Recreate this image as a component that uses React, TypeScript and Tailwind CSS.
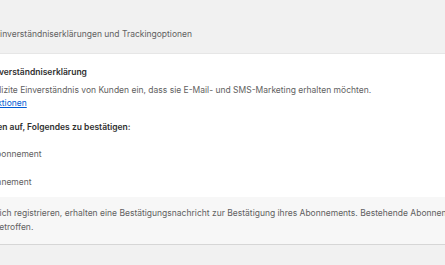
export default function App() {
  return (
    <div className="w-[445px] h-[265px] overflow-hidden bg-[#f1f1f1] font-['Inter',sans-serif] text-[8.5px] leading-[13.5px] text-[#303030]">
      <div className="h-[54px] pt-[27.5px] text-[#616161]">
        <p className="-ml-[5px] whitespace-nowrap">Einverständniserklärungen und Trackingoptionen</p>
      </div>

      <section className="bg-white shadow-[0_-1px_0_#e6e6e6,0_1px_0_#d6d6d6]">
        <div className="flex flex-col pt-[11.5px] pb-[7px] whitespace-nowrap">
          <h2 className="-ml-[13.5px] font-semibold">Einverständniserklärung</h2>
          <p className="mt-[4.5px] -ml-[53px] text-[#616161]">
            Hole das explizite Einverständnis von Kunden ein, dass sie E-Mail- und SMS-Marketing erhalten möchten.
          </p>
          <a href="#" className="-ml-[112px] text-[#005bd3] underline">Weitere Informationen zu Aktionen</a>

          <p className="mt-[10.5px] -ml-[58px] font-semibold">Fordere Kunden auf, Folgendes zu bestätigen:</p>

          <div className="mt-[13px] flex flex-col gap-[15px] text-[#616161]">
            <label className="-ml-[53px] flex items-center gap-[5px]">
              <input type="checkbox" className="w-[9px] h-[9px]" />
              <span>E-Mail-Abonnement</span>
            </label>
            <label className="-ml-[56px] flex items-center gap-[5px]">
              <input type="checkbox" className="w-[9px] h-[9px]" />
              <span>SMS-Abonnement</span>
            </label>
          </div>
        </div>

        <div className="bg-[#f7f7f7] pt-[10.5px] pb-[9.5px] text-[#616161] whitespace-nowrap">
          <p className="-ml-[55px]">
            Kunden, die sich registrieren, erhalten eine Bestätigungsnachricht zur Bestätigung ihres Abonnements. Bestehende Abonnenten sind
            <br />
            davon nicht betroffen.
          </p>
        </div>
      </section>
    </div>
  );
}
